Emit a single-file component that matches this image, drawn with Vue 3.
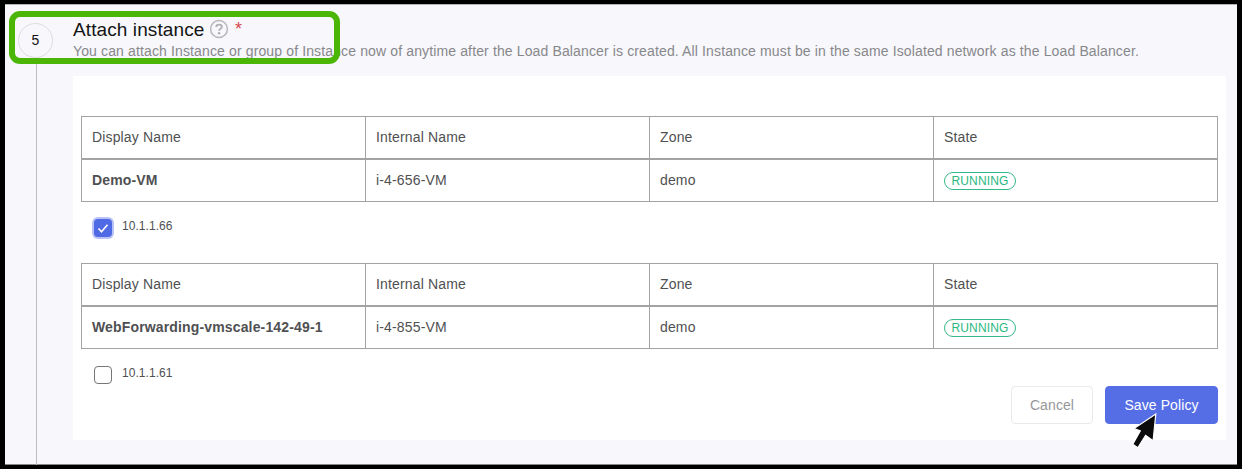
<script setup>
const groups = [
  { name: 'Demo-VM', internal: 'i-4-656-VM', zone: 'demo', state: 'RUNNING', ip: '10.1.1.66', checked: true },
  { name: 'WebForwarding-vmscale-142-49-1', internal: 'i-4-855-VM', zone: 'demo', state: 'RUNNING', ip: '10.1.1.61', checked: false },
]
const columns = ['Display Name', 'Internal Name', 'Zone', 'State']
</script>

<template>
  <main class="frame">
    <aside class="rail">
      <div class="step">5</div>
      <div class="line"></div>
    </aside>
    <section class="content">
      <header class="heading">
        <h1 class="title">Attach instance</h1>
        <svg class="help" viewBox="0 0 20 20" fill="none">
          <circle cx="10" cy="10" r="8.4" stroke="#b7b7bb" stroke-width="1.5" />
          <path d="M7.2 8.1C7.2 6.4 8.4 5.6 10 5.6s2.9.9 2.9 2.4c0 1.9-2.8 1.8-2.8 3.8" stroke="#b0b0b4" stroke-width="1.8" />
          <circle cx="10.1" cy="14.2" r="1.2" fill="#b0b0b4" />
        </svg>
        <span class="required">*</span>
      </header>
      <p class="description">You can attach Instance or group of Instance now of anytime after the Load Balancer is created. All Instance must be in the same Isolated network as the Load Balancer.</p>
      <div class="panel">
        <div v-for="group in groups" :key="group.name" class="group">
          <div class="row">
            <div v-for="column in columns" :key="column" class="cell">{{ column }}</div>
          </div>
          <div class="row">
            <div class="cell name">{{ group.name }}</div>
            <div class="cell">{{ group.internal }}</div>
            <div class="cell">{{ group.zone }}</div>
            <div class="cell"><span class="badge">{{ group.state }}</span></div>
          </div>
          <div class="choice">
            <span class="box" :class="{ checked: group.checked }">
              <svg v-if="group.checked" viewBox="0 0 18 18" fill="none"><path d="M4.5 9.5l3 3.3 6-7" stroke="#fff" stroke-width="1.6" /></svg>
            </span>
            <span class="ip">{{ group.ip }}</span>
          </div>
        </div>
        <footer class="actions">
          <button class="button cancel">Cancel</button>
          <button class="button save">Save Policy</button>
        </footer>
      </div>
    </section>
    <div class="highlight"></div>
    <svg class="cursor" viewBox="0 0 34 42"><path d="M25.8 5L4 19.5l6.3 2.4L2.8 35.3l5 3.4L15.6 26.4l7.5 5.4z" fill="#0b0b0b" stroke="#fff" stroke-width="1.2" /></svg>
  </main>
</template>

<style>
body { background: #000; }
</style>

<style scoped>
.frame {
  position: relative;
  box-sizing: border-box;
  width: 1242px;
  height: 469px;
  border: solid #000;
  border-width: 4px 5px;
  display: flex;
  background: #f7f7fc;
  color: #4f5052;
  font-family: "Liberation Sans", Arial, sans-serif;
  box-shadow: inset 0 1px #b3b3b3, inset 0 -1px #888;
}
.rail { width: 68px; display: flex; flex-direction: column; }
.step {
  box-sizing: border-box;
  width: 35px;
  height: 35px;
  margin: 19px 0 0 13px;
  border: 1px solid #dddde1;
  border-radius: 50%;
  color: #111;
  font-size: 14px;
  line-height: 33px;
  text-align: center;
}
.line { width: 1px; flex: 1; margin-left: 31px; background: #bdbdbf; }
.content { width: 1153px; }
.heading { display: flex; height: 38px; }
.title { margin: 14px 0 0; color: #141414; font-size: 19px; line-height: 24px; font-weight: 400; letter-spacing: 0.1px; width: 131px; white-space: nowrap; }
.help { width: 20px; height: 20px; margin: 15px 0 0 5px; }
.required { margin: 13px 0 0 6px; color: #d8494b; font-size: 18px; line-height: 24px; }
.description { margin: 0; height: 34px; color: #88888b; font-size: 14px; line-height: 18px; letter-spacing: 0.132px; white-space: nowrap; }
.panel { box-sizing: border-box; height: 364px; padding: 40px 8px 0; background: #fff; }
.group { height: 147px; }
.row { box-sizing: border-box; width: 1137px; height: 43px; display: flex; border: 1px solid #a3a3a3; }
.cell { box-sizing: border-box; flex: 0 0 284px; padding-left: 10px; border-right: 1px solid #a3a3a3; font-size: 14px; line-height: 41px; letter-spacing: 0.15px; }
.cell:last-child { flex: 1; border-right: 0; }
.name { font-weight: 700; }
.badge { display: inline-block; box-sizing: border-box; width: 72px; height: 18px; border: 1px solid #35b887; border-radius: 9px; color: #2ab782; font-size: 12px; line-height: 17px; text-align: center; vertical-align: middle; }
.choice { display: flex; margin: 17px 0 0 13px; }
.box { box-sizing: border-box; width: 18px; height: 18px; border: 1px solid #75757a; border-radius: 4px; }
.checked { border: 0; background: #5069e4; box-shadow: 0 0 0 2px #b8c2f5; }
.box svg { display: block; width: 18px; height: 18px; }
.ip { margin: -1px 0 0 10px; font-size: 12px; line-height: 16px; letter-spacing: 0.05px; }
.actions { display: flex; justify-content: flex-end; gap: 12px; margin-top: -24px; }
.button { box-sizing: border-box; height: 38px; padding: 0; border-radius: 4px; font: 14px/36px "Liberation Sans", Arial, sans-serif; letter-spacing: 0.1px; }
.cancel { width: 82px; border: 1px solid #eaeaec; background: #fff; color: #96969a; }
.save { width: 113px; border: 1px solid #556ee6; background: #556ee6; color: #fff; }
.highlight { position: absolute; box-sizing: border-box; left: 4px; top: 7px; width: 331px; height: 53px; border: 6px solid #4bb606; border-radius: 11px; }
.cursor { position: absolute; left: 1125px; top: 405px; width: 34px; height: 42px; }
</style>
